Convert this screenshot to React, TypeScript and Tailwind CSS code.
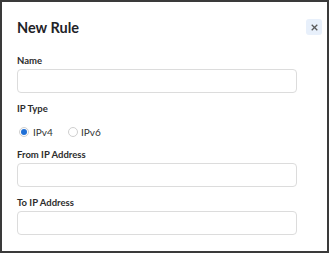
import { FC } from "react";

const Field: FC<{ label: string; className?: string }> = ({ label, className }) => (
  <div className={className}>
    <label className="block text-[9.5px] font-bold leading-[12px] text-[#2d2d2d]">{label}</label>
    <input
      type="text"
      className="mt-[2px] block h-[24px] w-[280px] rounded-[4px] border border-[#dcdcdc] bg-white outline-none"
    />
  </div>
);

const App: FC = () => {
  return (
    <div className="h-[255px] w-[330px] bg-white" style={{ fontFamily: "Lato, 'Liberation Sans', sans-serif" }}>
      <div className="h-[253px] w-[329px] border-2 border-[#3a3a3a] bg-white pl-[15px] pt-[16px]">
        <div className="flex items-start justify-between pr-[5px]">
          <h2 className="text-[14.5px] font-bold leading-[20px] text-[#1f2328]">New Rule</h2>
          <button className="mt-[1px] flex h-[16px] w-[16px] items-center justify-center rounded-[3px] bg-[#e8f0fb] text-[#5a5a5a]">
            <svg width="7" height="7" viewBox="0 0 10 10" fill="none" stroke="currentColor" strokeWidth="1.8">
              <path d="M1 1l8 8M9 1l-8 8" />
            </svg>
          </button>
        </div>

        <Field label="Name" className="mt-[17px]" />

        <div className="mt-[10px]">
          <div className="text-[9.5px] font-bold leading-[12px] text-[#2d2d2d]">IP Type</div>
          <div className="mt-[11px] flex h-[12px] items-center pl-[2px] text-[10px] text-[#333]">
            <label className="flex w-[49px] items-center gap-[4px]">
              <span className="flex h-[10px] w-[10px] items-center justify-center rounded-full border border-[#cfcfcf] bg-white">
                <span className="h-[6px] w-[6px] rounded-full bg-[#1f6fd6]" />
              </span>
              IPv4
            </label>
            <label className="flex items-center gap-[3px]">
              <span className="h-[10px] w-[10px] rounded-full border border-[#cfcfcf] bg-white" />
              IPv6
            </label>
          </div>
        </div>

        <Field label="From IP Address" className="mt-[11px]" />
        <Field label="To IP Address" className="mt-[10px]" />
      </div>
    </div>
  );
};

export default App;
